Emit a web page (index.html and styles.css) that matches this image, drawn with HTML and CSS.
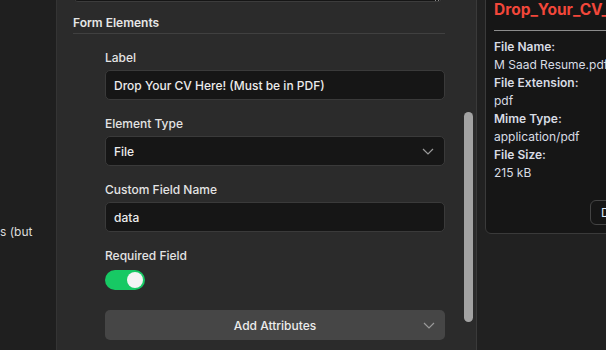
FILE: index.html
```html
<!DOCTYPE html>
<html>
<head>
<meta charset="utf-8">
<link rel="stylesheet" href="styles.css">
</head>
<body>
<div class="app">
  <aside class="left">
    <p class="left-text">s (but</p>
  </aside>
  <main class="middle">
    <div class="form">
      <div class="top-box"><span class="grip"></span></div>
      <h3 class="section-title">Form Elements</h3>
      <div class="fields">
        <div class="field">
          <label class="field-label">Label</label>
          <div class="input">Drop Your CV Here! (Must be in PDF)</div>
        </div>
        <div class="field">
          <label class="field-label">Element Type</label>
          <div class="input select">File
            <svg class="chev" width="12" height="7" viewBox="0 0 12 7"><path d="M1 1l5 5 5-5" fill="none" stroke="#9a9a9a" stroke-width="1.2"/></svg>
          </div>
        </div>
        <div class="field">
          <label class="field-label">Custom Field Name</label>
          <div class="input">data</div>
        </div>
        <div class="field">
          <label class="field-label">Required Field</label>
          <div class="toggle"><span class="knob"></span></div>
        </div>
        <div class="attr-btn">Add Attributes
          <svg class="chev" width="12" height="7" viewBox="0 0 12 7"><path d="M1 1l5 5 5-5" fill="none" stroke="#9a9a9a" stroke-width="1.2"/></svg>
        </div>
      </div>
    </div>
    <div class="scroll"><div class="thumb"></div></div>
  </main>
  <section class="right">
    <div class="card">
      <h2 class="card-title">Drop_Your_CV_Here</h2>
      <hr class="card-rule">
      <dl class="meta">
        <dt>File Name:</dt><dd>M Saad Resume.pdf</dd>
        <dt>File Extension:</dt><dd>pdf</dd>
        <dt>Mime Type:</dt><dd>application/pdf</dd>
        <dt>File Size:</dt><dd>215 kB</dd>
      </dl>
      <div class="card-actions"><button class="card-btn">Download</button></div>
    </div>
  </section>
</div>
</body>
</html>
```
FILE: styles.css
```css
* { box-sizing: border-box; }
html, body { margin: 0; padding: 0; }
body {
  width: 606px;
  height: 350px;
  overflow: hidden;
  background: #212121;
  font-family: Inter, "Noto Sans", sans-serif;
  font-size: 12px;
  color: #e2e2e2;
}
.app {
  display: flex;
  height: 350px;
}
.left {
  width: 57px;
  flex: none;
  background: #1f1f1f;
  border-right: 1px solid #343434;
  padding-top: 223px;
}
.left-text {
  margin: 0;
  line-height: 18px;
  white-space: nowrap;
  color: #dcdcdc;
}
.middle {
  width: 420px;
  flex: none;
  background: #2b2b2b;
  border-right: 1px solid #3a3a3a;
  display: flex;
}
.form {
  margin-left: 16px;
  width: 372px;
  flex: none;
}
.top-box {
  width: 370px;
  height: 32px;
  margin-top: -30px;
  background: #151515;
  border: 1px solid #3c3c3c;
  border-radius: 5px;
  display: flex;
  justify-content: flex-end;
  align-items: flex-end;
  padding: 0 3px 0 0;
}
.grip {
  width: 4px;
  height: 3px;
  border-left: 1px solid #8a8a8a;
  border-right: 1px solid #8a8a8a;
}
.section-title {
  margin: 13px 0 0;
  font-size: 12px;
  font-weight: 600;
  line-height: 16px;
  color: #e6e6e6;
  padding-bottom: 2px;
  border-bottom: 1px solid #404040;
}
.fields {
  margin-left: 32px;
  padding-top: 16px;
  display: flex;
  flex-direction: column;
  gap: 16px;
}
.field {
  display: flex;
  flex-direction: column;
  gap: 4px;
}
.field-label {
  line-height: 16px;
  font-weight: 500;
  color: #e4e4e4;
}
.input {
  height: 30px;
  background: #161616;
  border: 1px solid #3a3a3a;
  border-radius: 5px;
  padding: 0 8px;
  display: flex;
  align-items: center;
  justify-content: space-between;
  color: #ececec;
  font-weight: 500;
}
.chev { flex: none; margin-right: 2px; }
.toggle {
  margin-top: 2px;
  width: 40px;
  height: 20px;
  border-radius: 10px;
  background: #17c964;
  display: flex;
  align-items: center;
  justify-content: flex-end;
  padding-right: 2px;
}
.knob {
  width: 16px;
  height: 16px;
  border-radius: 50%;
  background: #f4f4f4;
}
.attr-btn {
  margin-top: 4px;
  height: 30px;
  background: #464646;
  border-radius: 5px;
  display: flex;
  align-items: center;
  justify-content: center;
  position: relative;
  font-weight: 500;
  color: #ececec;
}
.attr-btn .chev {
  position: absolute;
  right: 8px;
  top: 12px;
}
.scroll {
  margin-left: 19px;
  padding-top: 112px;
}
.thumb {
  width: 9px;
  height: 210px;
  border-radius: 5px;
  background: #a3a3a3;
}
.right {
  flex: 1;
  min-width: 0;
  overflow: hidden;
  padding-left: 8px;
}
.card {
  width: 220px;
  margin-top: -10px;
  background: #161616;
  border: 1px solid #3a3a3a;
  border-radius: 6px;
  padding: 9px 8px 8px;
}
.card-title {
  margin: 0;
  font-size: 15.5px;
  font-weight: 700;
  line-height: 20px;
  color: #f2473a;
  white-space: nowrap;
}
.card-rule {
  margin: 10px 0 0;
  border: 0;
  border-top: 1px solid #8c8c8c;
}
.meta {
  margin: 7px 0 0;
  line-height: 18px;
  color: #d8dce4;
}
.meta dt { font-weight: 600; }
.meta dd { margin: 0; }
.card-actions {
  display: flex;
  margin-top: 18px;
  padding-left: 96px;
}
.card-btn {
  height: 25px;
  padding: 0 10px;
  background: #161616;
  border: 1px solid #444;
  border-radius: 6px;
  font-family: inherit;
  font-size: 12px;
  color: #dfe8f5;
}
```
